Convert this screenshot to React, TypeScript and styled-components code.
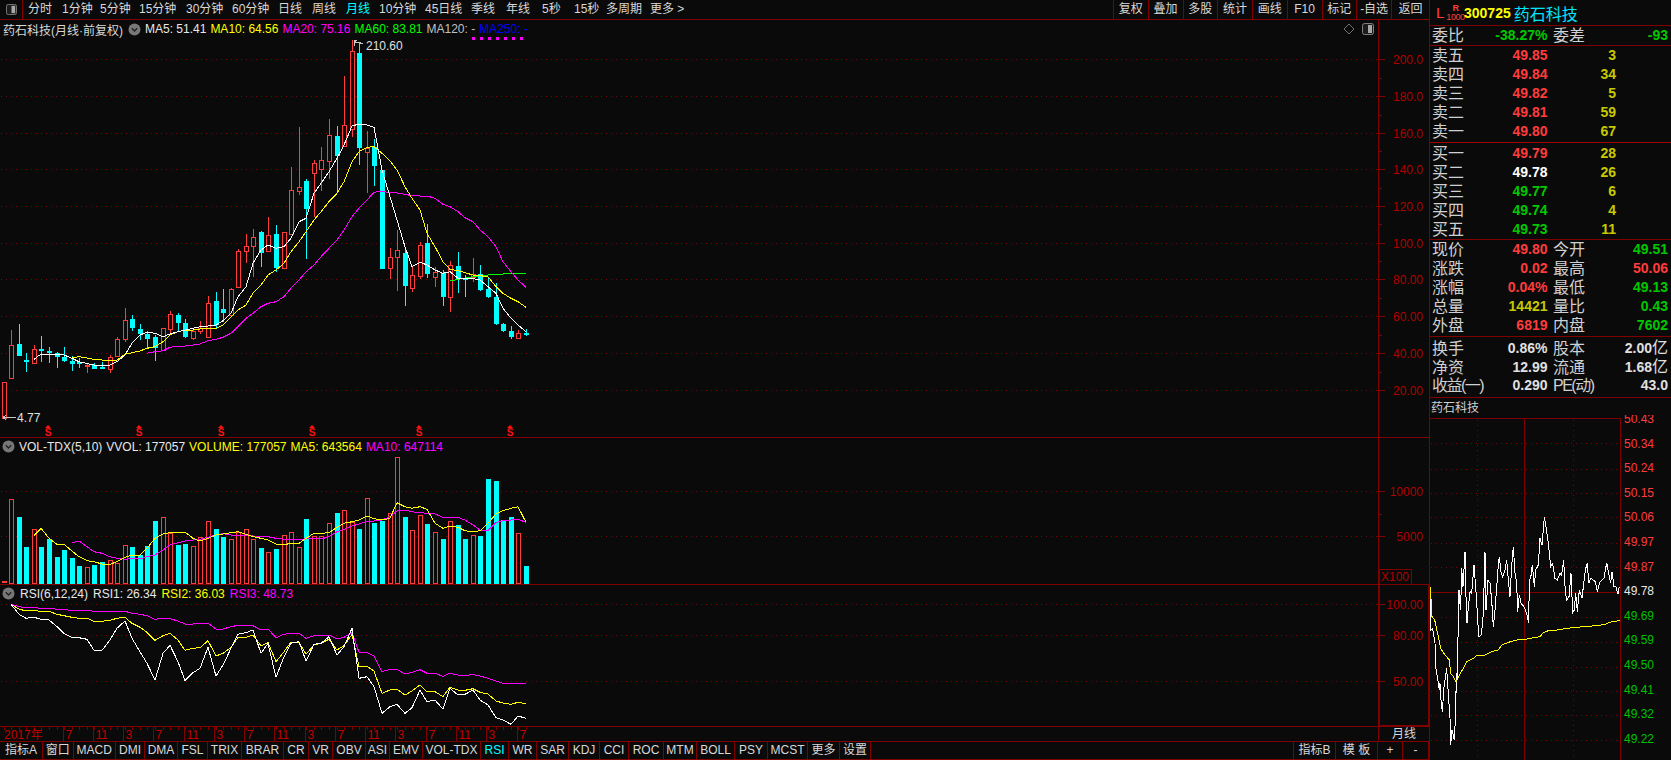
import React from 'react';
import styled, { createGlobalStyle } from 'styled-components';

const RED_LINE = '#800000';
const AXIS_RED = '#b00000';
const UP = '#ff3c3c';
const DOWN = '#00ffff';
const BG = '#0a0a0a';
const FONT = '"Liberation Sans", "Noto Sans CJK SC", sans-serif';

const GlobalStyle = createGlobalStyle`
  html, body {
    margin: 0;
    background: ${BG};
    font-family: ${FONT};
    overflow: hidden;
  }
`;

// K线 [阳线, 实体上, 实体下, 最高, 最低]
const candles: number[][] = [
  [1, 382, 418, 382, 418], [1, 345, 378, 330, 378], [0, 344, 356, 324, 356], [0, 360, 362, 353, 372],
  [1, 349, 363, 345, 363], [0, 349, 351, 336, 362], [0, 351, 352, 347, 363], [0, 353, 357, 352, 368],
  [0, 357, 361, 347, 362], [0, 361, 364, 356, 371], [0, 362, 363, 358, 368], [1, 365, 366, 363, 373],
  [0, 365, 369, 363, 369], [0, 367, 369, 362, 369], [1, 357, 369, 355, 373], [1, 339, 356, 337, 357],
  [1, 320, 339, 308, 342], [0, 319, 328, 315, 331], [0, 329, 334, 324, 340], [0, 334, 339, 331, 348],
  [0, 337, 348, 335, 361], [1, 328, 350, 328, 350], [1, 314, 329, 311, 333], [0, 315, 323, 313, 332],
  [0, 323, 337, 319, 338], [1, 331, 338, 329, 340], [1, 328, 331, 321, 334], [1, 303, 337, 296, 337],
  [0, 301, 325, 292, 329], [0, 309, 313, 289, 322], [1, 289, 315, 288, 317], [1, 251, 287, 249, 288],
  [1, 246, 251, 234, 263], [1, 237, 246, 229, 277], [0, 232, 253, 231, 267], [1, 235, 251, 217, 252],
  [0, 234, 268, 225, 272], [1, 232, 268, 232, 268], [1, 190, 234, 167, 234], [1, 187, 191, 127, 195],
  [0, 181, 209, 179, 259], [1, 163, 173, 160, 217], [1, 160, 169, 147, 191], [1, 135, 161, 119, 179],
  [0, 136, 156, 126, 193], [1, 125, 146, 76, 147], [1, 51, 129, 40, 137], [0, 53, 148, 43, 165],
  [1, 148, 152, 131, 193], [0, 147, 166, 139, 186], [0, 170, 269, 170, 269], [1, 257, 268, 248, 279],
  [1, 250, 257, 230, 291], [0, 253, 286, 250, 306], [1, 275, 288, 267, 292], [1, 245, 276, 242, 279],
  [0, 243, 274, 224, 278], [1, 272, 277, 267, 287], [0, 273, 297, 270, 306], [1, 265, 297, 261, 312],
  [0, 266, 279, 252, 293], [0, 278, 279, 275, 297], [1, 274, 277, 258, 282], [0, 274, 290, 265, 291],
  [0, 289, 297, 277, 298], [0, 297, 324, 283, 325], [0, 324, 331, 323, 332], [0, 331, 337, 326, 339],
  [1, 333, 338, 330, 339], [0, 333, 335, 329, 336],
];

const ma5 = [359.3, 354, 354, 354, 355, 358.3, 361.7, 363.5, 365, 365.5, 365, 361.7, 355, 343.3, 335, 332.3, 333.3, 336.7, 334, 331.7, 330, 328.3, 326.7, 326, 325, 320.7, 313.3, 296.7, 286.7, 263.3, 250, 245, 248.3, 246.7, 238.3, 221.7, 218.3, 193.3, 183.3, 171.7, 158.3, 145, 126, 124, 125, 127.3, 170, 196.7, 220, 246.7, 266.7, 262.3, 265, 270, 273.3, 271.7, 278.3, 279, 278.7, 280, 286.7, 293.3, 308.3, 318.3, 325, 331.7];
const ma10 = [357.7, 356.7, 358, 359.3, 360, 360.7, 360, 354.3, 352.7, 351, 348.3, 346.7, 341.7, 335, 331.7, 330, 330, 329, 328.3, 328.3, 325, 317.3, 310, 305, 293.3, 285, 275, 270, 263.3, 251.7, 241.7, 231.7, 220, 211.7, 201.7, 193.3, 181.7, 161.7, 151.7, 147.3, 146.7, 153.3, 160.7, 170, 186.7, 198.3, 210, 233.3, 246.7, 261.7, 269.3, 270.7, 272.7, 275, 275.7, 276.7, 286.7, 293.3, 298.3, 301.7, 307.3];
const ma20 = [353.3, 351.7, 350.7, 347.3, 346, 346, 345, 344, 340.7, 339.3, 337.3, 333.3, 326.7, 318.3, 313.3, 306.7, 303.3, 301.7, 296.7, 288.3, 280, 271.7, 265, 256.7, 248.3, 240, 230, 216.7, 208.3, 200, 192.3, 191.3, 192.7, 193, 194.3, 195.7, 196, 196, 198.3, 204.3, 206.7, 211.7, 217.7, 221.7, 230, 236.7, 246.7, 261.7, 271.7, 280, 287.3];
const ma60 = [281, 279.3, 278.3, 276.7, 275.7, 275, 274.3, 274, 273.3, 273.3, 273.3];

// 成交量 柱顶(放大3倍坐标)
const volTops = [423, 178, 231, 321, 268, 321, 297, 351, 330, 354, 378, 382, 375, 366, 360, 370, 316, 321, 345, 318, 243, 232, 280, 315, 312, 319, 292, 244, 267, 291, 298, 275, 268, 298, 324, 337, 327, 286, 277, 322, 237, 287, 287, 250, 219, 211, 245, 267, 175, 249, 242, 220, 52, 231, 271, 226, 252, 277, 297, 244, 255, 297, 286, 288, 117, 123, 240, 231, 280, 378];
const volMa5 = [287, 265, 295, 313, 313, 333, 350, 362, 365, 372, 373, 365, 352, 345, 345, 325, 295, 282, 278, 276, 276, 295, 303, 295, 285, 282, 278, 275, 283, 290, 295, 300, 312, 314, 310, 310, 295, 280, 280, 278, 262, 250, 245, 240, 228, 236, 240, 235, 188, 200, 205, 200, 208, 250, 265, 258, 262, 272, 275, 272, 250, 222, 212, 205, 200, 247];
const volMa10 = [308, 303, 320, 335, 340, 350, 355, 358, 355, 357, 350, 345, 330, 315, 308, 303, 300, 298, 292, 285, 281, 285, 285, 287, 288, 290, 290, 295, 298, 298, 300, 296, 296, 297, 290, 275, 268, 258, 252, 245, 243, 240, 230, 213, 210, 215, 218, 220, 222, 232, 232, 232, 240, 255, 270, 272, 248, 242, 240, 238, 247];

const rsi3 = [58, 65, 68, 68, 70, 70, 73, 74, 76, 76, 76, 79, 79, 79, 79, 79, 85, 88, 92, 103, 100, 101, 108, 117, 117, 116, 115, 132, 132, 125, 121, 121, 122, 135, 132, 158, 148, 144, 145, 160, 152, 150, 150, 162, 157, 143, 202, 203, 212, 260, 253, 253, 267, 262, 254, 265, 265, 274, 265, 270, 271, 269, 273, 280, 288, 295, 295, 295, 296];
const rsi2 = [58, 72, 78, 77, 79, 79, 88, 92, 97, 100, 100, 109, 109, 106, 100, 97, 115, 127, 142, 166, 152, 145, 165, 196, 190, 188, 167, 213, 205, 187, 157, 157, 150, 183, 172, 230, 200, 172, 172, 208, 180, 175, 163, 195, 182, 148, 246, 244, 258, 325, 315, 313, 330, 318, 300, 320, 320, 335, 307, 315, 316, 311, 322, 327, 348, 354, 358, 352, 356];
const rsi1 = [58, 88, 100, 97, 103, 105, 125, 145, 158, 158, 163, 196, 196, 165, 130, 108, 160, 200, 235, 285, 205, 181, 230, 287, 263, 250, 187, 273, 240, 190, 148, 143, 135, 205, 175, 277, 215, 175, 170, 228, 178, 175, 155, 210, 185, 130, 280, 275, 305, 385, 365, 358, 385, 368, 315, 350, 345, 373, 310, 330, 328, 315, 345, 360, 398, 405, 418, 393, 400];

// 分时 (放大3倍坐标)
const miniPrice: number[][] = [[31, 530], [33, 660], [38, 655], [45, 700], [47, 770], [52, 800], [58, 840], [60, 820], [63, 870], [67, 905], [72, 830], [80, 775], [85, 850], [90, 925], [92, 1005], [96, 960], [103, 990], [107, 905], [109, 790], [110, 850], [115, 640], [117, 540], [119, 570], [122, 600], [125, 475], [129, 530], [135, 425], [138, 560], [141, 640], [145, 590], [150, 545], [155, 550], [162, 465], [168, 545], [172, 610], [176, 680], [184, 675], [190, 610], [195, 425], [198, 600], [204, 510], [210, 520], [215, 570], [220, 650], [225, 600], [231, 520], [235, 465], [238, 440], [243, 485], [248, 500], [255, 480], [260, 450], [265, 510], [270, 560], [275, 470], [280, 410], [285, 490], [290, 520], [293, 605], [298, 555], [303, 580], [312, 590], [320, 610], [326, 640], [328, 510], [332, 505], [337, 465], [343, 530], [347, 480], [355, 465], [360, 385], [366, 405], [373, 320], [378, 350], [385, 400], [392, 470], [398, 460], [405, 505], [412, 510], [420, 490], [425, 495], [431, 450], [436, 545], [440, 570], [447, 560], [453, 490], [458, 608], [463, 600], [467, 548], [472, 605], [478, 540], [486, 565], [490, 530], [496, 480], [502, 458], [506, 520], [512, 505], [520, 510], [526, 515], [532, 545], [540, 515], [552, 505], [560, 458], [566, 490], [572, 520], [576, 485], [582, 530], [588, 530], [594, 553], [598, 530]];
const miniAvg: number[][] = [[31, 530], [36, 620], [44, 630], [55, 680], [62, 715], [75, 735], [88, 750], [92, 790], [100, 800], [108, 815], [118, 795], [130, 775], [140, 755], [160, 745], [170, 737], [195, 735], [215, 725], [235, 720], [245, 705], [265, 697], [290, 690], [320, 687], [360, 680], [370, 668], [390, 660], [410, 660], [440, 655], [490, 650], [530, 647], [555, 643], [575, 635], [600, 632]];
const miniLabels = ['50.43', '50.34', '50.24', '50.15', '50.06', '49.97', '49.87', '49.78', '49.69', '49.59', '49.50', '49.41', '49.32', '49.22'];

const barX = (i: number) => Math.round(3.6 + i * 7.568);
const linePts = (ys: number[], start: number, toY: (v: number) => number = (v) => v) =>
  ys.map((v, k) => `${barX(start + k)},${toY(v).toFixed(1)}`).join(' ');
const volY = (z: number) => 440 + z / 3;
const rsiY = (z: number) => 585 + z / 3;
const miniPts = (pts: number[][]) => pts.map(([x, y]) => `${1420 + x / 3},${410 + y / 3}`).join(' ');

const Page = styled.div`
  display: flex;
  width: 1671px;
  height: 760px;
  background: ${BG};
  overflow: hidden;
`;

const LeftColumn = styled.div`
  display: flex;
  flex-direction: column;
  width: 1429px;
  flex: none;
`;

const Toolbar = styled.div`
  display: flex;
  height: 20px;
  flex: none;
  box-sizing: border-box;
  border-bottom: 1px solid ${RED_LINE};
  font-size: 12px;
  line-height: 19px;
  color: #d8d8d8;
`;

const ToolIconCell = styled.div`
  display: flex;
  align-items: center;
  justify-content: center;
  width: 23px;
  margin-right: 5px;
  box-sizing: border-box;
  border-right: 1px solid ${RED_LINE};
`;

const ToolItem = styled.span<{ $w: number; $active?: boolean }>`
  width: ${(p) => p.$w}px;
  flex: none;
  white-space: nowrap;
  color: ${(p) => (p.$active ? '#00ffff' : '#d8d8d8')};
`;

const ToolButtons = styled.div`
  display: grid;
  grid-template-columns: repeat(8, 34.75px) 1fr;
  margin-left: auto;
  width: 316px;
`;

const ToolButton = styled.span`
  box-sizing: border-box;
  border-left: 1px solid ${RED_LINE};
  text-align: center;
  white-space: nowrap;
`;

const Pane = styled.div<{ $h: number }>`
  display: flex;
  height: ${(p) => p.$h}px;
  flex: none;
  box-sizing: border-box;
  border-bottom: 1px solid ${RED_LINE};
`;

const ChartArea = styled.div`
  display: flex;
  flex-direction: column;
  width: 1379px;
  flex: none;
  box-sizing: border-box;
  border-right: 1px solid ${RED_LINE};
`;

const PaneHeader = styled.div<{ $h: number; $gap?: number }>`
  display: flex;
  align-items: center;
  gap: ${(p) => p.$gap || 4}px;
  height: ${(p) => p.$h}px;
  flex: none;
  padding-left: 2px;
  font-size: 12px;
  white-space: nowrap;
  color: #d8d8d8;
`;

const PaneTitle = styled.span`
  margin-right: 1px;
  padding-left: 1px;
`;

const HeaderValue = styled.span<{ $c?: string }>`
  position: relative;
  color: ${(p) => p.$c || '#e8e8e8'};
`;

const DottedMark = styled.i`
  position: absolute;
  left: -7px;
  top: 15px;
  width: 51px;
  height: 3px;
  background: repeating-linear-gradient(90deg, #ff00ff 0 3px, transparent 3px 8px);
`;

const HeaderIcons = styled.div`
  display: flex;
  align-items: center;
  gap: 7px;
  margin-left: auto;
  padding-right: 4px;
`;

const AxisBox = styled.div<{ $active?: boolean }>`
  width: 50px;
  flex: none;
  box-shadow: ${(p) => (p.$active ? `inset 1px 0 0 ${RED_LINE}, inset -1px 0 0 ${RED_LINE}, inset 0 -1px 0 ${RED_LINE}` : 'none')};
`;

const TimeRow = styled.div`
  display: flex;
  height: 15px;
  flex: none;
  box-sizing: border-box;
  border-bottom: 1px solid ${RED_LINE};
`;

const PeriodCell = styled.div`
  width: 50px;
  flex: none;
  font-size: 12px;
  line-height: 14px;
  text-align: center;
  color: #d8d8d8;
`;

const TabBar = styled.div`
  display: flex;
  height: 18px;
  flex: none;
  box-sizing: border-box;
  border-bottom: 1px solid ${RED_LINE};
  font-size: 12px;
  line-height: 17px;
`;

const Tab = styled.span<{ $w: number; $active?: boolean }>`
  width: ${(p) => p.$w}px;
  flex: none;
  box-sizing: border-box;
  border-right: 1px solid ${RED_LINE};
  text-align: center;
  white-space: nowrap;
  color: ${(p) => (p.$active ? '#00ffff' : '#d8d8d8')};
`;

const TabSpacer = styled.span`
  flex: 1;
  border-right: 1px solid ${RED_LINE};
`;

const RightPanel = styled.div`
  display: flex;
  flex-direction: column;
  width: 242px;
  flex: none;
  box-sizing: border-box;
  border-left: 1px solid ${RED_LINE};
`;

const Section = styled.div<{ $h: number; $pt?: number; $strong?: boolean }>`
  height: ${(p) => p.$h}px;
  flex: none;
  box-sizing: border-box;
  padding-top: ${(p) => p.$pt || 0}px;
  border-bottom: 1px solid ${(p) => (p.$strong ? '#a00000' : RED_LINE)};
`;

const StockHeader = styled(Section)`
  display: flex;
  align-items: center;
`;

const LevelL = styled.span`
  margin-left: 6px;
  width: 11px;
  font-size: 15px;
  color: ${UP};
`;

const LevelStack = styled.span`
  display: flex;
  flex-direction: column;
  align-items: center;
  width: 17px;
  color: ${UP};
  font-size: 9px;
  line-height: 9px;
  letter-spacing: -0.4px;
`;

const StockCode = styled.span`
  font-size: 14px;
  font-weight: 700;
  color: #ffff00;
`;

const StockName = styled.span`
  margin-left: 3px;
  font-size: 16px;
  color: #00e4ff;
`;

const OrderRow = styled.div`
  display: grid;
  grid-template-columns: 34px 83.5px 68.5px;
  height: 19px;
  align-items: center;
`;

const QuoteRow = styled.div<{ $wide?: boolean }>`
  display: grid;
  grid-template-columns: ${(p) => (p.$wide ? '62px 55.5px 50px 70.5px' : '34px 83.5px 38px 82.5px')};
  height: 19px;
  align-items: center;
`;

const Label = styled.span<{ $gap?: boolean; $tight?: boolean }>`
  padding-left: ${(p) => (p.$gap ? 5.5 : 2)}px;
  font-size: 16px;
  line-height: 19px;
  letter-spacing: ${(p) => (p.$tight ? '-1.5px' : 'normal')};
  color: #d0d0d0;
  white-space: nowrap;
`;

const Value = styled.span<{ $c?: string }>`
  font-size: 14px;
  font-weight: 700;
  line-height: 19px;
  text-align: right;
  white-space: nowrap;
  color: ${(p) => p.$c || '#e0e0e0'};
`;

const Unit = styled.span`
  font-size: 16px;
  font-weight: 400;
`;

const MiniTitle = styled.div`
  height: 17px;
  flex: none;
  padding-left: 1px;
  font-size: 12px;
  line-height: 20px;
  color: #d0d0d0;
`;

const ChartSvg = styled.svg`
  display: block;
  flex: none;
`;

const CircleIcon = () => (
  <svg width="13" height="13" viewBox="0 0 13 13">
    <circle cx="6.5" cy="6.5" r="6" fill="#777" />
    <path d="M3.8 5.2 L6.5 8 L9.2 5.2" stroke="#222" strokeWidth="1.4" fill="none" />
  </svg>
);

const PanelIcon = ({ size = 12 }: { size?: number }) => (
  <svg width={size} height={size} viewBox="0 0 12 12">
    <rect x="0.5" y="0.5" width="11" height="11" rx="2" fill="#1c1c1c" stroke="#808080" />
    <rect x="6" y="2" width="4" height="8" fill="#a8a8a8" />
  </svg>
);

const Diamond = () => (
  <svg width="12" height="12" viewBox="0 0 12 12">
    <path d="M6 1 L11 6 L6 11 L1 6 Z" stroke="#707070" fill="none" />
  </svg>
);

const DotLine = ({ y, x1 = 1, x2 = 1378 }: { y: number; x1?: number; x2?: number }) => (
  <line x1={x1} x2={x2} y1={y + 0.5} y2={y + 0.5} stroke={RED_LINE} strokeDasharray="1 4" shapeRendering="crispEdges" />
);

const Poly = ({ pts, c }: { pts: string; c: string }) => (
  <polyline points={pts} fill="none" stroke={c} shapeRendering="crispEdges" />
);

const SMark = ({ x }: { x: number }) => (
  <g fill="#ff1010">
    <path d={`M${x - 3} 428 L${x} 425 L${x + 3} 428 Z`} />
    <text x={x} y={436} fontSize="10" fontWeight="700" textAnchor="middle" fontFamily={FONT}>S</text>
  </g>
);

const PriceChart = () => (
  <ChartSvg width="1378" height="399" viewBox="0 38 1378 399">
    {[59, 96, 133, 169, 206, 243, 279, 316, 353, 390].map((y) => <DotLine key={y} y={y} />)}
    {candles.map(([up, top, bot, hi, lo], i) => {
      const x = barX(i);
      const c = up ? UP : DOWN;
      return (
        <g key={i} shapeRendering="crispEdges">
          <line x1={x + 0.5} x2={x + 0.5} y1={hi} y2={top} stroke={c} />
          <line x1={x + 0.5} x2={x + 0.5} y1={bot} y2={lo} stroke={c} />
          {up ? (
            <rect x={x - 1.5} y={top + 0.5} width={4} height={Math.max(bot - top, 1)} fill={BG} stroke={c} />
          ) : (
            <rect x={x - 2} y={top} width={5} height={Math.max(bot - top, 2)} fill={c} />
          )}
        </g>
      );
    })}
    <Poly pts={linePts(ma60, 59)} c="#00ff00" />
    <Poly pts={linePts(ma20, 19)} c="#ff00ff" />
    <Poly pts={linePts(ma10, 9)} c="#ffff00" />
    <Poly pts={linePts(ma5, 4)} c="#ffffff" />
    <path d="M363 44 L358 42 L354 42 M354 40 L354 46 M354 42 L357 40" stroke="#c8c8c8" fill="none" shapeRendering="crispEdges" />
    <text x="366" y="50" fontSize="12" fill="#e0e0e0" fontFamily={FONT}>210.60</text>
    <path d="M16 417.5 L3 417.5 M3 417.5 L6 415 M3 417.5 L6 420" stroke="#c8c8c8" fill="none" shapeRendering="crispEdges" />
    <text x="17" y="422" fontSize="12" fill="#e0e0e0" fontFamily={FONT}>4.77</text>
    {[48, 139, 221, 312, 419, 510].map((x) => <SMark key={x} x={x} />)}
  </ChartSvg>
);

const VolumeChart = () => (
  <ChartSvg width="1378" height="129" viewBox="0 455 1378 129">
    <DotLine y={491} />
    <DotLine y={536} />
    {volTops.map((z, i) => {
      const x = barX(i);
      const top = Math.round(volY(z));
      const up = candles[i][0];
      if (i === 0) return <rect key={i} x={x - 2} y={top} width={5} height={583 - top} fill={UP} />;
      return up ? (
        <rect key={i} x={x - 1.5} y={top + 0.5} width={4} height={583 - top} fill={BG} stroke={UP} shapeRendering="crispEdges" />
      ) : (
        <rect key={i} x={x - 2} y={top} width={5} height={584 - top} fill={DOWN} />
      );
    })}
    <Poly pts={linePts(volMa10, 9, volY)} c="#ff00ff" />
    <Poly pts={linePts(volMa5, 4, volY)} c="#ffff00" />
  </ChartSvg>
);

const RsiChart = () => (
  <ChartSvg width="1378" height="124" viewBox="0 602 1378 124">
    <DotLine y={604} />
    <DotLine y={635} />
    <DotLine y={681} />
    <Poly pts={linePts(rsi3, 1, rsiY)} c="#ff00ff" />
    <Poly pts={linePts(rsi2, 1, rsiY)} c="#ffff00" />
    <Poly pts={linePts(rsi1, 1, rsiY)} c="#ffffff" />
  </ChartSvg>
);

type AxisProps = { top: number; h: number; labels: [string, number][]; minor?: number[]; children?: React.ReactNode };

const AxisSvg = ({ top, h, labels, minor = [], children }: AxisProps) => (
  <ChartSvg width="50" height={h} viewBox={`1379 ${top} 50 ${h}`}>
    {labels.map(([t, y]) => (
      <g key={t}>
        <line x1="1379" x2="1385" y1={y + 0.5} y2={y + 0.5} stroke={RED_LINE} shapeRendering="crispEdges" />
        <text x="1423" y={y + 4.5} fontSize="12" textAnchor="end" fill={AXIS_RED} fontFamily={FONT}>{t}</text>
      </g>
    ))}
    {minor.map((y) => (
      <line key={y} x1="1379" x2="1382" y1={y + 0.5} y2={y + 0.5} stroke={RED_LINE} shapeRendering="crispEdges" />
    ))}
    {children}
  </ChartSvg>
);

const priceAxis: [string, number][] = [['200.0', 59], ['180.0', 96], ['160.0', 133], ['140.0', 169], ['120.0', 206], ['100.0', 243], ['80.00', 279], ['60.00', 316], ['40.00', 353], ['20.00', 390]];

const TimeAxis = () => {
  const ticks = ['7', '11', '3', '7', '11', '3', '7', '11', '3', '7', '11', '3', '7', '11', '3', '7'];
  return (
    <ChartSvg width="1379" height="14" viewBox="0 727 1379 14">
      <line x1="1378.5" x2="1378.5" y1="727" y2="741" stroke={RED_LINE} />
      {Array.from({ length: 70 }, (_, i) => (
        <line key={i} x1={barX(i) + 0.5} x2={barX(i) + 0.5} y1="727" y2="730" stroke={RED_LINE} shapeRendering="crispEdges" />
      ))}
      <text x="4" y="739" fontSize="12" fill="#c00000" fontFamily={FONT}>2017年</text>
      {ticks.map((t, k) => {
        const x = Math.round(62.5 + k * 30.27);
        return (
          <g key={k}>
            <line x1={x + 0.5} x2={x + 0.5} y1="727" y2="741" stroke={RED_LINE} shapeRendering="crispEdges" />
            <text x={x + 2.5} y="739" fontSize="12" fill="#c00000" fontFamily={FONT}>{t}</text>
          </g>
        );
      })}
    </ChartSvg>
  );
};

const MiniChart = () => {
  const hLines = [100, 176, 250, 322, 398, 472, 620, 695, 770, 842, 916, 990].map((z) => Math.round(410 + z / 3));
  return (
    <ChartSvg width="241" height="345" viewBox="1430 415 241 345">
      <line x1="1430" x2="1621" y1="418.5" y2="418.5" stroke={RED_LINE} shapeRendering="crispEdges" />
      {hLines.map((y) => <DotLine key={y} y={y} x1={1431} x2={1620} />)}
      <line x1="1477.5" x2="1477.5" y1="420" y2="760" stroke={RED_LINE} strokeDasharray="1 4" shapeRendering="crispEdges" />
      <line x1="1573.5" x2="1573.5" y1="420" y2="760" stroke={RED_LINE} strokeDasharray="1 4" shapeRendering="crispEdges" />
      <line x1="1524.5" x2="1524.5" y1="419" y2="760" stroke={RED_LINE} shapeRendering="crispEdges" />
      <line x1="1620.5" x2="1620.5" y1="418" y2="760" stroke={RED_LINE} shapeRendering="crispEdges" />
      <line x1="1430" x2="1621" y1="592.5" y2="592.5" stroke={RED_LINE} shapeRendering="crispEdges" />
      <Poly pts={miniPts(miniPrice)} c="#ffffff" />
      <Poly pts={miniPts(miniAvg)} c="#ffff00" />
      {miniLabels.map((t, i) => (
        <text
          key={t}
          x="1624"
          y={423 + i * 24.6}
          fontSize="12"
          fill={i < 7 ? UP : i === 7 ? '#e8e8e8' : '#00c000'}
          fontFamily={FONT}
        >
          {t}
        </text>
      ))}
    </ChartSvg>
  );
};

const toolItems: [string, number][] = [['分时', 34], ['1分钟', 38], ['5分钟', 39], ['15分钟', 47], ['30分钟', 46], ['60分钟', 46], ['日线', 34], ['周线', 34], ['月线', 33], ['10分钟', 46], ['45日线', 46], ['季线', 35], ['年线', 36], ['5秒', 32], ['15秒', 32], ['多周期', 44], ['更多 >', 40]];
const toolButtons = ['复权', '叠加', '多股', '统计', '画线', 'F10', '标记', '-自选', '返回'];
const tabs: [string, number][] = [['指标A', 43], ['窗口', 30.5], ['MACD', 42.5], ['DMI', 29], ['DMA', 33], ['FSL', 30], ['TRIX', 34], ['BRAR', 42], ['CR', 25], ['VR', 24], ['OBV', 33], ['ASI', 24], ['EMV', 33], ['VOL-TDX', 58], ['RSI', 28], ['WR', 28], ['SAR', 32], ['KDJ', 31], ['CCI', 29], ['ROC', 35], ['MTM', 33], ['BOLL', 38], ['PSY', 33], ['MCST', 40], ['更多', 32], ['设置', 31]];

const C_RED = '#ff3c3c';
const C_GREEN = '#00c800';
const C_YELLOW = '#c8c800';

const asks: [string, string, string][] = [['卖五', '49.85', '3'], ['卖四', '49.84', '34'], ['卖三', '49.82', '5'], ['卖二', '49.81', '59'], ['卖一', '49.80', '67']];
const bids: [string, string, string, string][] = [['买一', '49.79', '28', C_RED], ['买二', '49.78', '26', '#ffffff'], ['买三', '49.77', '6', C_GREEN], ['买四', '49.74', '4', C_GREEN], ['买五', '49.73', '11', C_GREEN]];
const stats: [string, string, string, string, string, string][] = [
  ['现价', '49.80', C_RED, '今开', '49.51', C_GREEN],
  ['涨跌', '0.02', C_RED, '最高', '50.06', C_RED],
  ['涨幅', '0.04%', C_RED, '最低', '49.13', C_GREEN],
  ['总量', '14421', C_YELLOW, '量比', '0.43', C_GREEN],
  ['外盘', '6819', C_RED, '内盘', '7602', C_GREEN],
];

export default function App() {
  return (
    <Page>
      <GlobalStyle />
      <LeftColumn>
        <Toolbar>
          <ToolIconCell><PanelIcon size={11} /></ToolIconCell>
          {toolItems.map(([t, w]) => (
            <ToolItem key={t} $w={w} $active={t === '月线'}>{t}</ToolItem>
          ))}
          <ToolButtons>
            {toolButtons.map((t) => <ToolButton key={t}>{t}</ToolButton>)}
          </ToolButtons>
        </Toolbar>

        <Pane $h={418}>
          <ChartArea>
            <PaneHeader $h={18}>
              <PaneTitle>药石科技(月线·前复权)</PaneTitle>
              <CircleIcon />
              <HeaderValue>MA5: 51.41</HeaderValue>
              <HeaderValue $c="#ffff00">MA10: 64.56</HeaderValue>
              <HeaderValue $c="#ff00ff">MA20: 75.16</HeaderValue>
              <HeaderValue $c="#00ff00">MA60: 83.81</HeaderValue>
              <HeaderValue $c="#c0c0c0">MA120: -</HeaderValue>
              <HeaderValue $c="#0000ff">MA250: -<DottedMark /></HeaderValue>
              <HeaderIcons>
                <Diamond />
                <PanelIcon />
              </HeaderIcons>
            </PaneHeader>
            <PriceChart />
          </ChartArea>
          <AxisBox>
            <AxisSvg top={20} h={417} labels={priceAxis} minor={[78, 115, 151, 188, 224, 261, 298, 335, 372]} />
          </AxisBox>
        </Pane>

        <Pane $h={147}>
          <ChartArea>
            <PaneHeader $h={17}>
              <CircleIcon />
              <HeaderValue>VOL-TDX(5,10)</HeaderValue>
              <HeaderValue>VVOL: 177057</HeaderValue>
              <HeaderValue $c="#ffff00">VOLUME: 177057</HeaderValue>
              <HeaderValue $c="#ffff00">MA5: 643564</HeaderValue>
              <HeaderValue $c="#ff00ff">MA10: 647114</HeaderValue>
            </PaneHeader>
            <VolumeChart />
          </ChartArea>
          <AxisBox>
            <AxisSvg top={438} h={146} labels={[['10000', 491], ['5000', 536]]} minor={[514]}>
              <rect x="1379.5" y="569.5" width="32" height="15" fill="none" stroke={RED_LINE} />
              <text x="1381" y="581" fontSize="12" fill={AXIS_RED} fontFamily={FONT}>X100</text>
            </AxisSvg>
          </AxisBox>
        </Pane>

        <Pane $h={142}>
          <ChartArea>
            <PaneHeader $h={17} $gap={5}>
              <CircleIcon />
              <HeaderValue>RSI(6,12,24)</HeaderValue>
              <HeaderValue>RSI1: 26.34</HeaderValue>
              <HeaderValue $c="#ffff00">RSI2: 36.03</HeaderValue>
              <HeaderValue $c="#ff00ff">RSI3: 48.73</HeaderValue>
            </PaneHeader>
            <RsiChart />
          </ChartArea>
          <AxisBox $active>
            <AxisSvg top={585} h={141} labels={[['100.00', 604], ['80.00', 635], ['50.00', 681]]} />
          </AxisBox>
        </Pane>

        <TimeRow>
          <TimeAxis />
          <PeriodCell>月线</PeriodCell>
        </TimeRow>

        <TabBar>
          {tabs.map(([t, w]) => (
            <Tab key={t} $w={w} $active={t === 'RSI'}>{t}</Tab>
          ))}
          <TabSpacer />
          <Tab $w={42}>指标B</Tab>
          <Tab $w={42}>模 板</Tab>
          <Tab $w={25}>+</Tab>
          <Tab $w={26}>-</Tab>
        </TabBar>
      </LeftColumn>

      <RightPanel>
        <StockHeader $h={26}>
          <LevelL>L</LevelL>
          <LevelStack><b>R</b><span>1000</span></LevelStack>
          <StockCode>300725</StockCode>
          <StockName>药石科技</StockName>
        </StockHeader>
        <Section $h={20}>
          <QuoteRow>
            <Label>委比</Label>
            <Value $c={C_GREEN}>-38.27%</Value>
            <Label $gap>委差</Label>
            <Value $c={C_GREEN}>-93</Value>
          </QuoteRow>
        </Section>
        <Section $h={97} $strong>
          {asks.map(([l, p, v]) => (
            <OrderRow key={l}>
              <Label>{l}</Label>
              <Value $c={C_RED}>{p}</Value>
              <Value $c={C_YELLOW}>{v}</Value>
            </OrderRow>
          ))}
        </Section>
        <Section $h={97} $pt={1}>
          {bids.map(([l, p, v, c]) => (
            <OrderRow key={l}>
              <Label>{l}</Label>
              <Value $c={c}>{p}</Value>
              <Value $c={C_YELLOW}>{v}</Value>
            </OrderRow>
          ))}
        </Section>
        <Section $h={97}>
          {stats.map(([a, b, bc, d, e, ec]) => (
            <QuoteRow key={a}>
              <Label>{a}</Label>
              <Value $c={bc}>{b}</Value>
              <Label $gap>{d}</Label>
              <Value $c={ec}>{e}</Value>
            </QuoteRow>
          ))}
        </Section>
        <Section $h={61} $pt={1}>
          <QuoteRow>
            <Label>换手</Label>
            <Value>0.86%</Value>
            <Label $gap>股本</Label>
            <Value>2.00<Unit>亿</Unit></Value>
          </QuoteRow>
          <QuoteRow>
            <Label>净资</Label>
            <Value>12.99</Value>
            <Label $gap>流通</Label>
            <Value>1.68<Unit>亿</Unit></Value>
          </QuoteRow>
          <QuoteRow $wide>
            <Label $tight>收益(一)</Label>
            <Value>0.290</Value>
            <Label $gap $tight>PE(动)</Label>
            <Value>43.0</Value>
          </QuoteRow>
        </Section>
        <MiniTitle>药石科技</MiniTitle>
        <MiniChart />
      </RightPanel>
    </Page>
  );
}
